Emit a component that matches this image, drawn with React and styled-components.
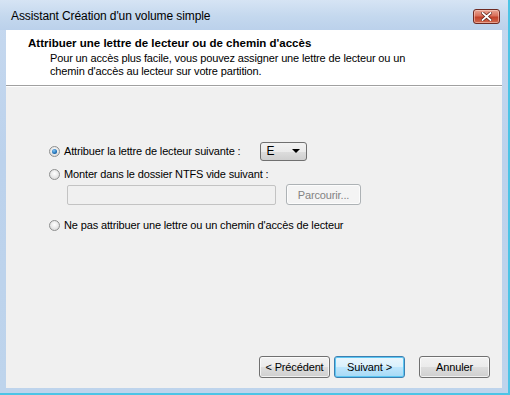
import React from "react";
import styled, { createGlobalStyle } from "styled-components";

const Global = createGlobalStyle`
  html, body { margin: 0; padding: 0; }
  body { width: 510px; height: 395px; overflow: hidden; font-family: "Liberation Sans", Arial, sans-serif; }
`;

const Window = styled.div`
  width: 510px;
  height: 395px;
  box-sizing: border-box;
  display: flex;
  flex-direction: column;
  background: linear-gradient(180deg, #c7d9ef 0%, #bcd2ec 40%, #bed4ec 100%);
  border-right: 2px solid #4cc4e6;
  border-bottom: 2px solid #4cc4e6;
`;

const TitleBar = styled.div`
  height: 30px;
  display: flex;
  align-items: flex-start;
  justify-content: space-between;
  padding: 0 8px 0 11px;
  box-sizing: border-box;
  font-size: 12px;
  color: #000;
  background: linear-gradient(180deg, #d6e4f4 0%, #c4d8ee 55%, #bbd1eb 100%);
`;

const Title = styled.span`
  margin-top: 9px;
  letter-spacing: -0.1px;
`;

const CloseBtn = styled.div`
  width: 27px;
  height: 15px;
  box-sizing: border-box;
  margin-top: 9px;
  border: 1px solid #6e2a23;
  border-radius: 3px;
  background: linear-gradient(180deg, #e8a493 0%, #d9705b 45%, #c2412a 55%, #d06a50 100%);
  box-shadow: inset 0 0 0 1px rgba(255,220,210,0.5);
  display: flex;
  align-items: center;
  justify-content: center;
`;

const Client = styled.div`
  flex: 1;
  margin: 0 6px 5px 6px;
  display: flex;
  flex-direction: column;
  background: #f0f0f0;
`;

const Header = styled.div`
  height: 56px;
  background: #fff;
  border-bottom: 1px solid #a0a0a0;
  box-shadow: 0 1px 0 #fff;
  padding: 6px 0 0 22px;
  box-sizing: border-box;
`;

const HeadTitle = styled.div`
  font-weight: bold;
  font-size: 11.5px;
  line-height: 14px;
  color: #000;
`;

const HeadSub = styled.div`
  font-size: 11px;
  line-height: 13px;
  letter-spacing: -0.14px;
  padding-left: 22px;
  margin-top: 2px;
  color: #000;
`;

const Body = styled.div`
  flex: 1;
  padding: 55px 0 0 43px;
  display: flex;
  flex-direction: column;
  font-size: 11px;
  letter-spacing: -0.14px;
  color: #000;
`;

const Row = styled.div`
  display: flex;
  align-items: center;
  height: ${p => p.h || 20}px;
  margin-top: ${p => p.mt || 0}px;
  padding-left: ${p => p.pl || 0}px;
`;

const Radio = styled.span`
  width: 11px;
  height: 11px;
  border-radius: 50%;
  box-sizing: border-box;
  border: 1px solid #8e8f8f;
  background: radial-gradient(circle at 50% 40%, #ffffff 0%, #e4e4e4 60%, #cfcfcf 100%);
  display: flex;
  align-items: center;
  justify-content: center;
  margin-right: 4px;
  flex: none;
  &::after {
    content: "";
    display: ${p => (p.checked ? "block" : "none")};
    width: 5px;
    height: 5px;
    border-radius: 50%;
    background: radial-gradient(circle at 40% 35%, #7fc4f5 0%, #1e6fb5 60%, #0c3f7a 100%);
  }
`;

const Label = styled.span`
  white-space: nowrap;
`;

const Combo = styled.div`
  width: 47px;
  height: 19px;
  box-sizing: border-box;
  margin-left: ${p => p.ml}px;
  border: 1px solid #707070;
  border-radius: 3px;
  background: linear-gradient(180deg, #f2f2f2 0%, #ebebeb 50%, #dddddd 51%, #cfcfcf 100%);
  display: flex;
  align-items: center;
  justify-content: space-between;
  padding: 0 6px 0 5px;
  font-size: 12px;
`;

const Arrow = styled.span`
  width: 0;
  height: 0;
  border-left: 4px solid transparent;
  border-right: 4px solid transparent;
  border-top: 4px solid #000;
`;

const TextBox = styled.div`
  width: 209px;
  height: 20px;
  box-sizing: border-box;
  border: 1px solid #c3c3c3;
  border-radius: 2px;
  background: #f0f0f0;
`;

const Button = styled.div`
  width: ${p => p.w || 71}px;
  height: ${p => p.hh || 22}px;
  box-sizing: border-box;
  margin-left: ${p => p.ml || 0}px;
  border: 1px solid ${p => (p.disabled ? "#adb2b5" : p.primary ? "#3c7fb1" : "#707070")};
  border-radius: 3px;
  background: ${p =>
    p.disabled
      ? "#f4f4f4"
      : p.primary
      ? "linear-gradient(180deg, #eaf6fd 0%, #d9f0fc 50%, #bee6fd 51%, #a7d9f5 100%)"
      : "linear-gradient(180deg, #f2f2f2 0%, #ebebeb 50%, #dddddd 51%, #cfcfcf 100%)"};
  box-shadow: ${p => (p.primary ? "inset 0 0 0 1px #5cc6f2" : "inset 0 0 0 1px rgba(255,255,255,0.7)")};
  color: ${p => (p.disabled ? "#838383" : "#000")};
  display: flex;
  align-items: center;
  justify-content: center;
  font-size: 11px;
  letter-spacing: -0.14px;
  white-space: nowrap;
`;

const Footer = styled.div`
  display: flex;
  justify-content: flex-end;
  padding: 0 12px 10px 0;
`;

export default function App() {
  return (
    <>
      <Global />
      <Window>
        <TitleBar>
          <Title>Assistant Création d'un volume simple</Title>
          <CloseBtn>
            <svg width="11" height="9" viewBox="0 0 11 9">
              <path d="M1.5 1 L9.5 8 M9.5 1 L1.5 8" stroke="#5a1d14" strokeWidth="3.2" strokeLinecap="square" />
              <path d="M1.5 1 L9.5 8 M9.5 1 L1.5 8" stroke="#ffffff" strokeWidth="1.8" strokeLinecap="square" />
            </svg>
          </CloseBtn>
        </TitleBar>
        <Client>
          <Header>
            <HeadTitle>Attribuer une lettre de lecteur ou de chemin d'accès</HeadTitle>
            <HeadSub>
              Pour un accès plus facile, vous pouvez assigner une lettre de lecteur ou un
              <br />
              chemin d'accès au lecteur sur votre partition.
            </HeadSub>
          </Header>
          <Body>
            <Row h={20}>
              <Radio checked />
              <Label>Attribuer la lettre de lecteur suivante :</Label>
              <Combo ml={20}>
                <span>E</span>
                <Arrow />
              </Combo>
            </Row>
            <Row h={20} mt={3}>
              <Radio />
              <Label>Monter dans le dossier NTFS vide suivant :</Label>
            </Row>
            <Row h={21} pl={18}>
              <TextBox />
              <Button disabled w={75} hh={21} ml={10}>Parcourir...</Button>
            </Row>
            <Row h={20} mt={10}>
              <Radio />
              <Label>Ne pas attribuer une lettre ou un chemin d'accès de lecteur</Label>
            </Row>
          </Body>
          <Footer>
            <Button w={71}>&lt; Précédent</Button>
            <Button primary w={71} ml={4}>Suivant &gt;</Button>
            <Button w={71} ml={14}>Annuler</Button>
          </Footer>
        </Client>
      </Window>
    </>
  );
}
